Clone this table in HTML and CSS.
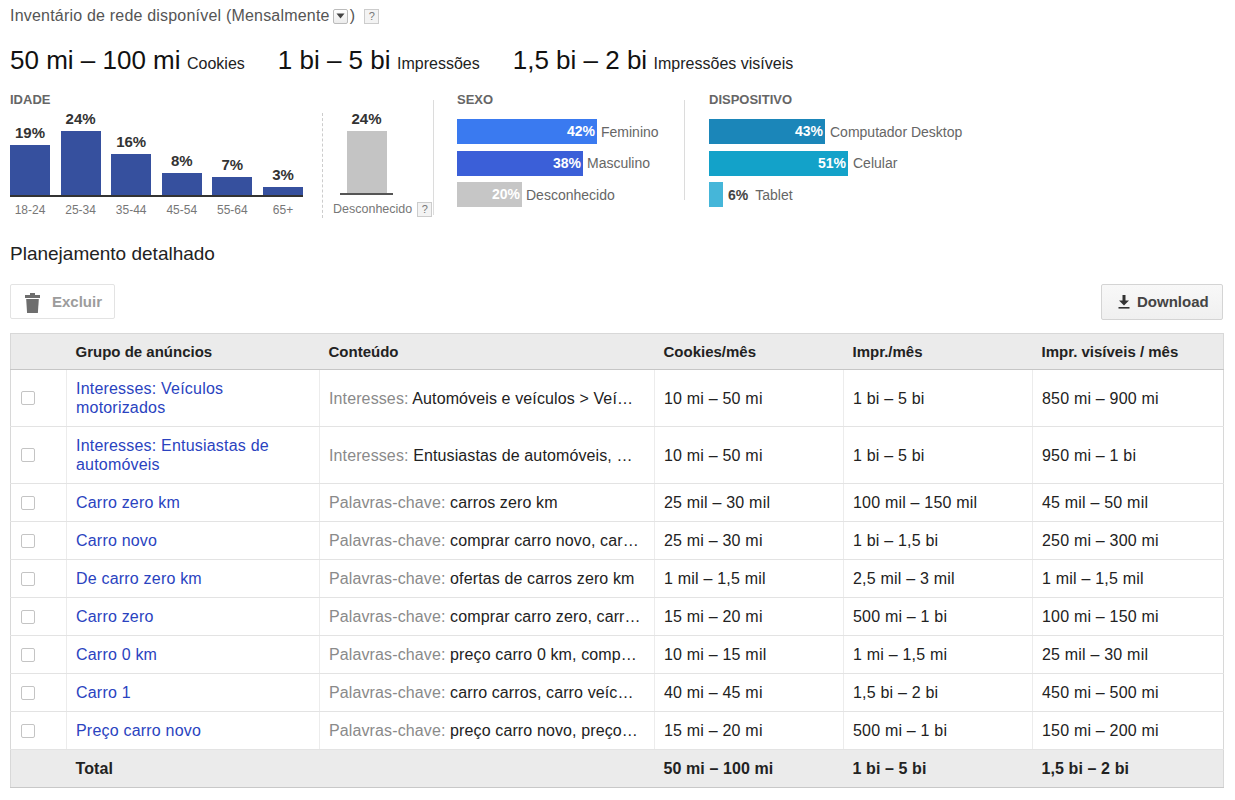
FILE: index.html
```html
<!DOCTYPE html>
<html lang="pt-BR">
<head>
<meta charset="utf-8">
<title>Planejamento detalhado</title>
<link rel="stylesheet" href="styles.css">
</head>
<body>
<div class="page">
  <div class="inv-title">Inventário de rede disponível (Mensalmente<span class="dd"><svg width="9" height="6" viewBox="0 0 9 6"><path d="M0.5 0.5h8L4.5 5.5z" fill="#444"/></svg></span>)<span class="help">?</span></div>

  <div class="stats">
    <div class="stat"><span class="big">50 mi – 100 mi</span> <span class="unit">Cookies</span></div>
    <div class="stat"><span class="big">1 bi – 5 bi</span> <span class="unit">Impressões</span></div>
    <div class="stat"><span class="big">1,5 bi – 2 bi</span> <span class="unit">Impressões visíveis</span></div>
  </div>

  <div class="charts">
    <div class="age">
      <div class="chart-label">IDADE</div>
      <div class="bars">
        <div class="bar-col"><div class="pct">19%</div><div class="bar" style="height:50px"></div></div>
        <div class="bar-col"><div class="pct">24%</div><div class="bar" style="height:64px"></div></div>
        <div class="bar-col"><div class="pct">16%</div><div class="bar" style="height:41px"></div></div>
        <div class="bar-col"><div class="pct">8%</div><div class="bar" style="height:22px"></div></div>
        <div class="bar-col"><div class="pct">7%</div><div class="bar" style="height:18px"></div></div>
        <div class="bar-col"><div class="pct">3%</div><div class="bar" style="height:8px"></div></div>
      </div>
      <div class="axis"><span>18-24</span><span>25-34</span><span>35-44</span><span>45-54</span><span>55-64</span><span>65+</span></div>
    </div>
    <div class="dashed"></div>
    <div class="unknown">
      <div class="chart-label"></div>
      <div class="bars unk-bars">
        <div class="bar-col"><div class="pct">24%</div><div class="bar bar-gray" style="height:62px"></div></div>
      </div>
      <div class="unk-axis"><span>Desconhecido</span><span class="help">?</span></div>
    </div>
    <div class="vline"></div>
    <div class="hchart sexo">
      <div class="chart-label">SEXO</div>
      <div class="hbars">
        <div class="hrow"><div class="hbar c-fem" style="width:140px">42%</div><span class="hlabel">Feminino</span></div>
        <div class="hrow"><div class="hbar c-masc" style="width:126px">38%</div><span class="hlabel">Masculino</span></div>
        <div class="hrow"><div class="hbar c-unk" style="width:65px">20%</div><span class="hlabel">Desconhecido</span></div>
      </div>
    </div>
    <div class="vline vline-short"></div>
    <div class="hchart device">
      <div class="chart-label">DISPOSITIVO</div>
      <div class="hbars">
        <div class="hrow"><div class="hbar c-desk" style="width:116px">43%</div><span class="hlabel">Computador Desktop</span></div>
        <div class="hrow"><div class="hbar c-cel" style="width:139px">51%</div><span class="hlabel">Celular</span></div>
        <div class="hrow"><div class="hbar c-tab" style="width:14px"></div><span class="opct">6%</span><span class="hlabel tab-label">Tablet</span></div>
      </div>
    </div>
  </div>

  <div class="section-title">Planejamento detalhado</div>

  <div class="toolbar">
    <button class="btn btn-del" type="button">
      <svg width="15" height="20" viewBox="0 0 15 20"><rect x="5" y="0" width="5" height="2" fill="#6e6e6e"/><rect x="0" y="2" width="15" height="3" fill="#6e6e6e"/><path d="M1.2 6h12.6l-0.9 14H2.1z" fill="#6e6e6e"/></svg>
      <span>Excluir</span>
    </button>
    <button class="btn btn-dl" type="button">
      <svg width="12" height="14" viewBox="0 0 12 14"><rect x="4.5" y="0" width="3" height="6" fill="#333"/><path d="M1 5.5h10L6 10.5z" fill="#333"/><rect x="0.5" y="12" width="11" height="1.6" fill="#333"/></svg>
      <span>Download</span>
    </button>
  </div>

  <table class="plan">
    <colgroup>
      <col class="w-chk"><col class="w-grp"><col class="w-cont"><col class="w-num"><col class="w-num"><col class="w-last">
    </colgroup>
    <thead>
      <tr><th></th><th>Grupo de anúncios</th><th>Conteúdo</th><th>Cookies/mês</th><th>Impr./mês</th><th>Impr. visíveis / mês</th></tr>
    </thead>
    <tbody>
      <tr><td class="chk"><span class="cb"></span></td><td><a class="lnk">Interesses: Veículos<br>motorizados</a></td><td class="cont"><span class="pre">Interesses:</span> Automóveis e veículos &gt; Veí…</td><td>10 mi – 50 mi</td><td>1 bi – 5 bi</td><td>850 mi – 900 mi</td></tr>
      <tr><td class="chk"><span class="cb"></span></td><td><a class="lnk">Interesses: Entusiastas de<br>automóveis</a></td><td class="cont"><span class="pre">Interesses:</span> Entusiastas de automóveis, …</td><td>10 mi – 50 mi</td><td>1 bi – 5 bi</td><td>950 mi – 1 bi</td></tr>
      <tr><td class="chk"><span class="cb"></span></td><td><a class="lnk">Carro zero km</a></td><td class="cont"><span class="pre">Palavras-chave:</span> carros zero km</td><td>25 mil – 30 mil</td><td>100 mil – 150 mil</td><td>45 mil – 50 mil</td></tr>
      <tr><td class="chk"><span class="cb"></span></td><td><a class="lnk">Carro novo</a></td><td class="cont"><span class="pre">Palavras-chave:</span> comprar carro novo, car…</td><td>25 mi – 30 mi</td><td>1 bi – 1,5 bi</td><td>250 mi – 300 mi</td></tr>
      <tr><td class="chk"><span class="cb"></span></td><td><a class="lnk">De carro zero km</a></td><td class="cont"><span class="pre">Palavras-chave:</span> ofertas de carros zero km</td><td>1 mil – 1,5 mil</td><td>2,5 mil – 3 mil</td><td>1 mil – 1,5 mil</td></tr>
      <tr><td class="chk"><span class="cb"></span></td><td><a class="lnk">Carro zero</a></td><td class="cont"><span class="pre">Palavras-chave:</span> comprar carro zero, carr…</td><td>15 mi – 20 mi</td><td>500 mi – 1 bi</td><td>100 mi – 150 mi</td></tr>
      <tr><td class="chk"><span class="cb"></span></td><td><a class="lnk">Carro 0 km</a></td><td class="cont"><span class="pre">Palavras-chave:</span> preço carro 0 km, comp…</td><td>10 mi – 15 mil</td><td>1 mi – 1,5 mi</td><td>25 mil – 30 mil</td></tr>
      <tr><td class="chk"><span class="cb"></span></td><td><a class="lnk">Carro 1</a></td><td class="cont"><span class="pre">Palavras-chave:</span> carro carros, carro veíc…</td><td>40 mi – 45 mi</td><td>1,5 bi – 2 bi</td><td>450 mi – 500 mi</td></tr>
      <tr><td class="chk"><span class="cb"></span></td><td><a class="lnk">Preço carro novo</a></td><td class="cont"><span class="pre">Palavras-chave:</span> preço carro novo, preço…</td><td>15 mi – 20 mi</td><td>500 mi – 1 bi</td><td>150 mi – 200 mi</td></tr>
    </tbody>
    <tfoot>
      <tr><td></td><td>Total</td><td></td><td>50 mi – 100 mi</td><td>1 bi – 5 bi</td><td>1,5 bi – 2 bi</td></tr>
    </tfoot>
  </table>
</div>
</body>
</html>
```

FILE: styles.css
```css
* { box-sizing: border-box; }
html, body { margin: 0; padding: 0; background: #fff; }
body { font-family: "Liberation Sans", Arial, Helvetica, sans-serif; color: #222; }

.page { width: 1235px; padding: 7px 12px 0 10px; }

/* Title line */
.inv-title { display: flex; align-items: center; height: 18px; font-size: 16px; line-height: 18px; letter-spacing: 0.2px; color: #555; white-space: nowrap; }
.dd { display: inline-flex; align-items: center; justify-content: center; width: 15px; height: 15px; margin: 0 2px 0 3px; border: 1px solid #bbb; border-radius: 2px; background: linear-gradient(#fff, #ececec); }
.help { display: inline-flex; align-items: center; justify-content: center; width: 15px; height: 15px; border: 1px solid #ccc; background: #f3f3f3; font-size: 11px; line-height: 1; letter-spacing: 0; color: #777; }
.inv-title .help { margin-left: 9px; }

/* Big stats */
.stats { display: flex; align-items: baseline; gap: 33px; margin-top: 20px; height: 30px; }
.stat { white-space: nowrap; }
.big { font-size: 26px; line-height: 30px; color: #111; }
.unit { margin-left: 2px; font-size: 16px; color: #222; }

/* Charts */
.charts { display: flex; margin-top: 17px; height: 126px; }
.chart-label { height: 15px; font-size: 13px; font-weight: bold; line-height: 15px; color: #666; }
.age { width: 293px; }
.bars { display: flex; align-items: flex-end; gap: 10.6px; height: 90px; border-bottom: 2px solid #333; }
.bar-col { display: flex; flex-direction: column; align-items: center; width: 40px; }
.pct { margin-bottom: 4px; font-size: 15px; font-weight: bold; line-height: 17px; color: #333; }
.bar { width: 40px; background: #36509e; }
.bar-gray { background: #c4c4c4; }
.axis { display: flex; gap: 10.6px; margin-top: 6px; font-size: 12px; line-height: 15px; color: #777; }
.axis span { width: 40px; text-align: center; }

.dashed { height: 105px; margin: 21px 0 0 19px; border-left: 1px dashed #ccc; }
.unknown { width: 110px; padding-left: 10px; }
.unk-bars { justify-content: center; width: 53px; height: 88px; margin-left: 7px; border-bottom: 2px solid #555; }
.unk-axis { display: flex; align-items: center; gap: 5px; margin-top: 7px; font-size: 12.5px; line-height: 15px; color: #777; white-space: nowrap; }

.vline { height: 115px; margin-top: 8px; border-left: 1px solid #dcdcdc; }
.vline-short { height: 100px; }

.sexo { width: 250px; padding-left: 23px; }
.device { padding-left: 24px; }
.hbars { display: flex; flex-direction: column; gap: 6.5px; margin-top: 12px; }
.hrow { display: flex; align-items: center; height: 25px; font-size: 14px; white-space: nowrap; }
.hbar { height: 25px; padding-right: 2px; font-weight: bold; line-height: 25px; text-align: right; color: #fff; }
.hlabel { margin-left: 4px; color: #666; }
.device .hlabel { margin-left: 5px; }
.opct { margin-left: 5px; font-weight: bold; color: #444; }
.device .tab-label { margin-left: 7px; }
.c-fem { background: #3a7af0; }
.c-masc { background: #3b5fd8; }
.c-unk { background: #c6c6c6; }
.c-desk { background: #1b86b9; }
.c-cel { background: #13a2c9; }
.c-tab { background: #45b6d9; }

/* Section title & toolbar */
.section-title { margin-top: 26px; font-size: 19px; line-height: 20px; color: #222; }
.toolbar { display: flex; align-items: center; justify-content: space-between; height: 37px; margin-top: 19px; }
.btn { display: flex; align-items: center; padding: 0; border-radius: 2px; font-family: inherit; font-size: 15px; font-weight: bold; cursor: default; }
.btn-del { gap: 12px; width: 105px; height: 35px; padding-left: 14px; border: 1px solid #e3e3e3; background: #fff; color: #9c9c9c; }
.btn-del svg { margin-top: 3px; }
.btn-dl { gap: 7px; width: 122px; height: 36px; padding-left: 16px; border: 1px solid #d4d4d4; background: linear-gradient(#f8f8f8, #f0f0f0); color: #444; }

/* Table */
.plan { width: 1213px; margin-top: 13px; border-collapse: collapse; table-layout: fixed; font-size: 16px; letter-spacing: 0.2px; border: 1px solid #d8d8d8; }
.w-chk { width: 56px; }
.w-grp { width: 253px; }
.w-cont { width: 335px; }
.w-num { width: 189px; }
.w-last { width: 191px; }
.plan th { padding: 8px 10px 8px 9px; font-size: 15px; font-weight: bold; line-height: 19px; letter-spacing: 0; text-align: left; color: #222; background: #ebebeb; border-top: 1px solid #d8d8d8; border-bottom: 1px solid #c6c6c6; }
.plan td { padding: 9px 10px 9px 9px; line-height: 19px; vertical-align: middle; border-bottom: 1px solid #e3e3e3; white-space: nowrap; }
.plan tbody td + td { border-left: 1px solid #ececec; }
.plan td.chk { padding-left: 10px; }
.cb { display: block; width: 14px; height: 14px; border: 1px solid #c4c4c4; border-radius: 2px; background: #fff; }
.lnk { color: #2a43c0; text-decoration: none; }
.cont { overflow: hidden; text-overflow: ellipsis; letter-spacing: 0.12px; }
.pre { color: #8a8a8a; }
.plan tfoot td { font-weight: bold; letter-spacing: 0.1px; background: #ebebeb; border-bottom: 1px solid #c8c8c8; }
```
